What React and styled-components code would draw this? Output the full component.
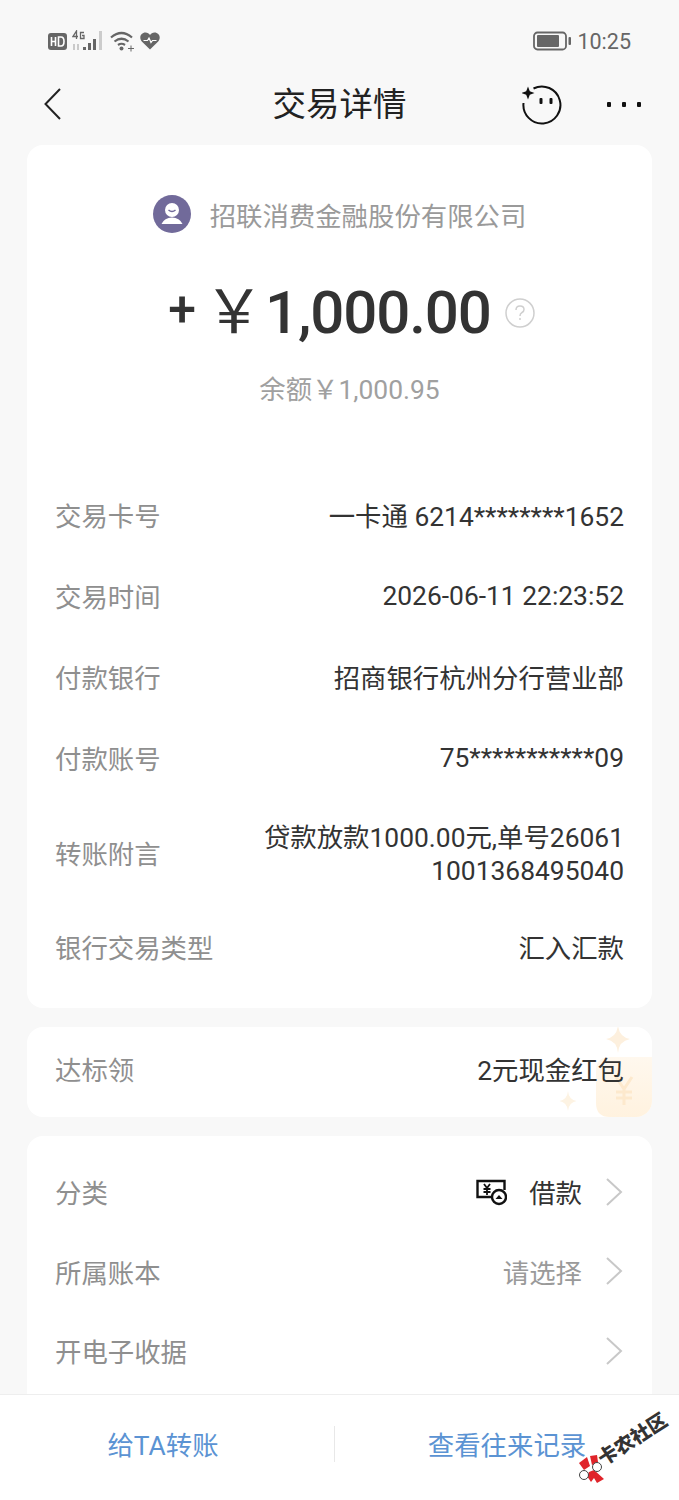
import React from 'react'
import styled, { createGlobalStyle } from 'styled-components'

const Global = createGlobalStyle`
  html, body { margin: 0; padding: 0; background: #f8f8f8; }
  body { font-family: Roboto, "Noto Sans CJK SC", sans-serif; }
`

const Page = styled.div`
  position: relative;
  width: 679px;
  height: 1500px;
  overflow: hidden;
  display: flex;
  flex-direction: column;
  background: #f8f8f8;
`

const StatusBar = styled.div`
  height: 82px;
  flex: none;
  box-sizing: border-box;
  padding: 29px 48px 0 48px;
  display: flex;
  justify-content: space-between;
  align-items: flex-start;
  color: #666;
`

const StatusIcons = styled.div`
  display: flex;
  align-items: center;
  gap: 5px;
  height: 24px;
`

const StatusRight = styled.div`
  display: flex;
  align-items: center;
  gap: 5px;
  height: 24px;
  font-size: 21.500px;
  color: #666;
`

const Header = styled.div`
  height: 46px;
  flex: none;
  position: relative;
  display: flex;
  align-items: center;
  justify-content: space-between;
  padding: 0 36px 0 44px;
`

const Title = styled.div`
  position: absolute;
  left: 0;
  right: 0;
  text-align: center;
  font-size: 33.500px;
  line-height: 46px;
  color: #222;
`

const HeaderActions = styled.div`
  display: flex;
  align-items: center;
  gap: 45px;
`

const Main = styled.div`
  flex: 1;
  overflow: hidden;
  padding: 17px 27px 0;
  display: flex;
  flex-direction: column;
  gap: 19px;
  font-size: 26.400px;
`

const Card = styled.div`
  flex: none;
  background: #fff;
  border-radius: 16px;
`

const DetailCard = styled(Card)`
  height: 863px;
  box-sizing: border-box;
  padding: 50px 28px 0;
`

const Payee = styled.div`
  display: flex;
  justify-content: center;
  align-items: center;
  gap: 19px;
  height: 38px;
  color: #9a9a9a;
`

const Amount = styled.div`
  margin-top: 47px;
  height: 66px;
  padding-left: 24px;
  display: flex;
  justify-content: center;
  align-items: center;
  color: #333;
`

const Sign = styled.span`
  font-size: 50px;
  font-weight: 500;
  line-height: 66px;
  margin: -8px 8px 0 0;
`

const Yen = styled.span`
  font-size: 60px;
  line-height: 66px;
  margin-right: 1px;
`

const Figure = styled.span`
  font-size: 60px;
  font-weight: 500;
  line-height: 66px;
  letter-spacing: -1.100px;
`

const Help = styled.span`
  display: inline-flex;
  margin: 0 0 0 14px;
`

const Balance = styled.div`
  margin-top: 26px;
  padding-left: 20px;
  text-align: center;
  line-height: 36px;
  color: #a0a0a0;
`

const Rows = styled.div`
  margin-top: 66px;
  display: flex;
  flex-direction: column;
`

const Row = styled.div`
  min-height: ${(p) => p.$h || 81}px;
  display: flex;
  justify-content: space-between;
  align-items: center;
`

const Label = styled.span`
  color: #8f8f8f;
  flex: none;
`

const Value = styled.span`
  color: #333;
  text-align: right;
`

const WrappedValue = styled(Value)`
  width: 362px;
  margin-top: 6px;
  line-height: 33px;
  word-break: break-all;
`

const PromoCard = styled(Card)`
  position: relative;
  height: 90px;
  box-sizing: border-box;
  padding: 0 28px 8px;
  display: flex;
  justify-content: space-between;
  align-items: center;
  overflow: hidden;
`

const PromoText = styled.span`
  position: relative;
  color: ${(p) => p.$dark ? '#333' : '#8f8f8f'};
`

const Coin = styled.svg`
  position: absolute;
  right: 0;
  bottom: 0;
`

const Spark = styled.svg`
  position: absolute;
  left: ${(p) => p.$x}px;
  top: ${(p) => p.$y}px;
`

const SettingsCard = styled(Card)`
  height: 320px;
  padding: 16px 28px 0;
`

const SettingRow = styled.div`
  height: 79.500px;
  display: flex;
  align-items: center;
  justify-content: space-between;
`

const SettingValue = styled.div`
  display: flex;
  align-items: center;
  gap: 22px;
  color: ${(p) => p.$muted ? '#9a9a9a' : '#333'};
`

const Footer = styled.div`
  flex: none;
  height: 106px;
  box-sizing: border-box;
  background: #fff;
  border-top: 1px solid #eeeeee;
  display: flex;
  align-items: center;
  padding-bottom: 8px;
  font-size: 26.400px;
`

const FooterLink = styled.div`
  flex: ${(p) => p.$grow ? 1 : 'none'};
  width: ${(p) => p.$grow ? 'auto' : '326px'};
  margin-right: ${(p) => p.$grow ? 0 : 8}px;
  text-align: center;
  color: #5b93d3;
`

const FooterDivider = styled.div`
  width: 1px;
  height: 36px;
  background: #e8e8e8;
`

const Watermark = styled.div`
  position: absolute;
  left: 578px;
  top: 1408px;
  width: 100px;
  height: 84px;
`

const WatermarkLogo = styled.svg`
  position: absolute;
  left: 0;
  top: 46px;
`

const WatermarkText = styled.span`
  position: absolute;
  left: 16px;
  top: 20px;
  font-size: 19.500px;
  line-height: 24px;
  font-weight: 900;
  white-space: nowrap;
  color: #333;
  transform: rotate(-33deg);
`

const Chevron = () => (
  <svg width="20" height="30" viewBox="0 0 20 30" fill="none" stroke="#c8c8c8" strokeWidth="2">
    <path d="M3 2 L17 15 L3 28" />
  </svg>
)

const detailRows = [
  ['交易卡号', '一卡通 6214********1652'],
  ['交易时间', '2026-06-11 22:23:52'],
  ['付款银行', '招商银行杭州分行营业部'],
  ['付款账号', '75***********09'],
]

export default function App() {
  return (
    <Page>
      <Global />
      <StatusBar>
        <StatusIcons>
          <svg width="19" height="19" viewBox="0 0 19 19">
            <rect x="0" y="1" width="19" height="17" rx="3" fill="#666" />
            <path d="M3.500 5v9M3.500 9.500h4M7.500 5v9M10.500 5v9h2.500q3 0 3-4.500t-3-4.500z" fill="none" stroke="#fff" strokeWidth="1.600" />
          </svg>
          <svg width="33" height="22" viewBox="0 0 33 22">
            <path d="M4.500 9V1L1 6.500h5M12 2.500H8.500v6H12V5.500h-2" fill="none" stroke="#666" strokeWidth="1.300" />
            <path d="M2 20v-6M6 20v-6" stroke="#bbb" strokeWidth="1.500" />
            <rect x="11" y="17" width="3" height="3" fill="#666" />
            <rect x="16" y="13" width="3" height="7" fill="#666" />
            <rect x="21" y="9" width="3" height="11" fill="#666" />
            <rect x="27" y="1" width="3" height="19" fill="#ccc" />
          </svg>
          <svg width="25" height="22" viewBox="0 0 25 22" fill="none" stroke="#666" strokeWidth="2.200">
            <path d="M1 7.500q10.500-9 21 0M4.500 11.500q7-5.500 14 0M8 15q3.500-2.500 7 0" />
            <circle cx="11.500" cy="18.500" r="2" fill="#666" stroke="none" />
            <path d="M18 18.500h6M21 15.500v6" strokeWidth="1" />
          </svg>
          <svg width="20" height="18" viewBox="0 0 20 18">
            <path d="M10 17.500L1.800 9.500C-1.500 5.500 1 .5 5.500.5 7.500.5 9 1.500 10 3c1-1.500 2.500-2.500 4.500-2.500 4.500 0 7 5 3.700 9z" fill="#666" />
            <path d="M3.500 8.500h4l1.500-2.500 2 4.500 1.500-2h4" fill="none" stroke="#fff" strokeWidth="1.200" />
          </svg>
        </StatusIcons>
        <StatusRight>
          <svg width="39" height="20" viewBox="0 0 39 20">
            <rect x="1" y="1.500" width="32" height="17" rx="3.500" fill="none" stroke="#666" strokeWidth="1.800" />
            <rect x="4" y="4" width="22" height="12" rx="1" fill="#666" />
            <rect x="35.500" y="6" width="2.500" height="8" rx="1" fill="#666" />
          </svg>
          <span>10:25</span>
        </StatusRight>
      </StatusBar>

      <Header>
        <svg width="20" height="34" viewBox="0 0 20 34" fill="none" stroke="#222" strokeWidth="2">
          <path d="M16 1 L1.500 16 L16 31" />
        </svg>
        <Title>交易详情</Title>
        <HeaderActions>
          <svg width="40" height="40" viewBox="0 0 40 40">
            <path d="M11.500 3.500A18.500 18.500 0 1 1 1.500 18" fill="none" stroke="#111" strokeWidth="2" />
            <path d="M6 1.500l1.800 4.700 4.700 1.800-4.700 1.800-1.800 4.700-1.800-4.700-4.700-1.800 4.700-1.800z" fill="#111" />
            <rect x="17.500" y="13" width="3" height="6" rx="1" fill="#111" />
            <rect x="27.500" y="13" width="3" height="6" rx="1" fill="#111" />
          </svg>
          <svg width="36" height="8" viewBox="0 0 36 8" fill="#111">
            <rect x="0" y="1" width="4" height="5" rx="1" />
            <rect x="15" y="1" width="4" height="5" rx="1" />
            <rect x="30" y="1" width="4" height="5" rx="1" />
          </svg>
        </HeaderActions>
      </Header>

      <Main>
        <DetailCard>
          <Payee>
            <svg width="38" height="38" viewBox="0 0 38 38">
              <circle cx="19" cy="19" r="19" fill="#716a9a" />
              <circle cx="19" cy="15" r="7" fill="#fff" />
              <path d="M15.500 15q3.500 3 7 0" fill="none" stroke="#716a9a" strokeWidth="1.500" />
              <path d="M8.500 29q3-6.500 10.500-6.500t10.500 6.500z" fill="#fff" />
            </svg>
            <span>招联消费金融股份有限公司</span>
          </Payee>
          <Amount>
            <Sign>+</Sign>
            <Yen>￥</Yen>
            <Figure>1,000.00</Figure>
            <Help>
              <svg width="30" height="30" viewBox="0 0 30 30">
                <circle cx="15" cy="15" r="14" fill="none" stroke="#cfcfcf" strokeWidth="1.500" />
                <path d="M11 12q0-4 4-4t4 3.500q0 2-2 3t-2 3.500" fill="none" stroke="#cfcfcf" strokeWidth="1.500" />
                <circle cx="15" cy="21" r="1" fill="#cfcfcf" />
              </svg>
            </Help>
          </Amount>
          <Balance>余额￥1,000.95</Balance>
          <Rows>
            {detailRows.map(([label, value]) => (
              <Row key={label}>
                <Label>{label}</Label>
                <Value>{value}</Value>
              </Row>
            ))}
            <Row $h={108}>
              <Label>转账附言</Label>
              <WrappedValue>贷款放款1000.00元,单号260611001368495040</WrappedValue>
            </Row>
            <Row>
              <Label>银行交易类型</Label>
              <Value>汇入汇款</Value>
            </Row>
          </Rows>
        </DetailCard>

        <PromoCard>
          <Coin width="56" height="60" viewBox="0 0 56 60">
            <defs>
              <linearGradient id="coinFill" x1="0" y1="0" x2="0" y2="1">
                <stop offset="0" stopColor="#fff8ee" />
                <stop offset="1" stopColor="#fff2df" />
              </linearGradient>
            </defs>
            <path d="M14 0H56V60H14Q0 60 0 46V14Q0 0 14 0z" fill="url(#coinFill)" />
            <path d="M20 20l8 12 8-12M28 32v16M20 35h16M20 41h16" fill="none" stroke="#fde9cd" strokeWidth="3" />
          </Coin>
          <Spark $x={577} $y={-4} width="28" height="32" viewBox="0 0 28 32">
            <path d="M14 2q1 12 12 14q-11 2-12 14q-1-12-12-14q11-2 12-14z" fill="#fdf0de" />
          </Spark>
          <Spark $x={531} $y={62} width="20" height="24" viewBox="0 0 28 32">
            <path d="M14 2q1 12 12 14q-11 2-12 14q-1-12-12-14q11-2 12-14z" fill="#fdf3e3" />
          </Spark>
          <PromoText>达标领</PromoText>
          <PromoText $dark>2元现金红包</PromoText>
        </PromoCard>

        <SettingsCard>
          <SettingRow>
            <Label>分类</Label>
            <SettingValue>
              <svg width="31" height="28" viewBox="0 0 31 28">
                <path d="M19 19H1.500V3h27v9" fill="none" stroke="#111" strokeWidth="2.400" />
                <path d="M8 6l3 4 3-4M11 10v7M7.500 11h7M7.500 14h7" fill="none" stroke="#111" strokeWidth="1.800" />
                <circle cx="23" cy="19" r="7" fill="#fff" stroke="#111" strokeWidth="2.400" />
                <path d="M19.500 21l3.500-4 3.500 4z" fill="#111" />
              </svg>
              <span>借款</span>
              <Chevron />
            </SettingValue>
          </SettingRow>
          <SettingRow>
            <Label>所属账本</Label>
            <SettingValue $muted>
              <span>请选择</span>
              <Chevron />
            </SettingValue>
          </SettingRow>
          <SettingRow>
            <Label>开电子收据</Label>
            <SettingValue>
              <Chevron />
            </SettingValue>
          </SettingRow>
        </SettingsCard>
      </Main>

      <Footer>
        <FooterLink>给TA转账</FooterLink>
        <FooterDivider />
        <FooterLink $grow>查看往来记录</FooterLink>
      </Footer>

      <Watermark>
        <WatermarkLogo width="28" height="30" viewBox="0 0 28 30">
          <path d="M1 9l8-6 3 9-6 4z" fill="#e0242a" />
          <path d="M12 2l7-1 1 7-6 3z" fill="#e0242a" />
          <path d="M11 18l5-2 10 9-7 4-3-5-3 4-4-6z" fill="#e0242a" />
          <circle cx="19" cy="13" r="4.500" fill="#fff" stroke="#444" strokeWidth="1" />
          <circle cx="6" cy="21" r="4.500" fill="#fff" stroke="#444" strokeWidth="1" />
        </WatermarkLogo>
        <WatermarkText>卡农社区</WatermarkText>
      </Watermark>
    </Page>
  )
}
